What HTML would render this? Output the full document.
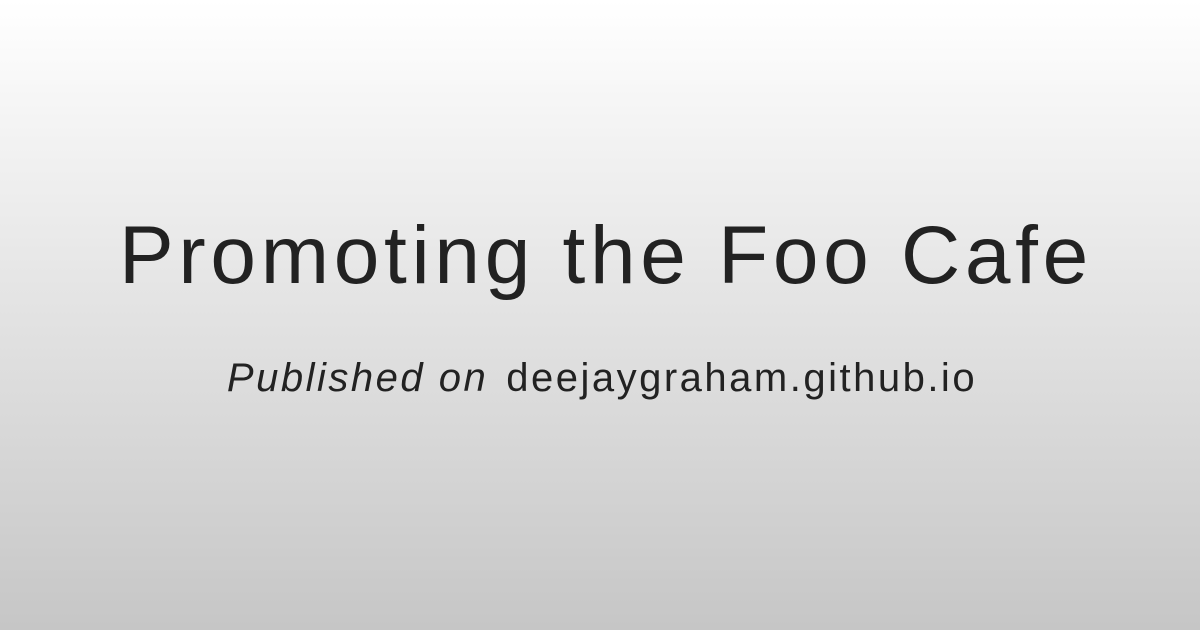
<!DOCTYPE html>
<html><head><meta charset="utf-8"><style>
html,body{margin:0;padding:0}
body{width:1200px;height:630px;background:linear-gradient(#ffffff,#c6c6c6);font-family:"Liberation Sans",sans-serif;color:#222;position:relative;overflow:hidden}
h1{position:absolute;left:6px;width:1200px;top:206px;margin:0;text-align:center;font-weight:normal;font-size:82px;line-height:100px;letter-spacing:4.7px}
p{position:absolute;left:2px;width:1200px;top:353px;margin:0;text-align:center;font-size:40px;line-height:50px;letter-spacing:2.5px}
i{margin-right:18px}
</style></head><body>
<h1>Promoting the Foo Cafe</h1>
<p><i>Published on</i>deejaygraham.github.io</p>
</body></html>
